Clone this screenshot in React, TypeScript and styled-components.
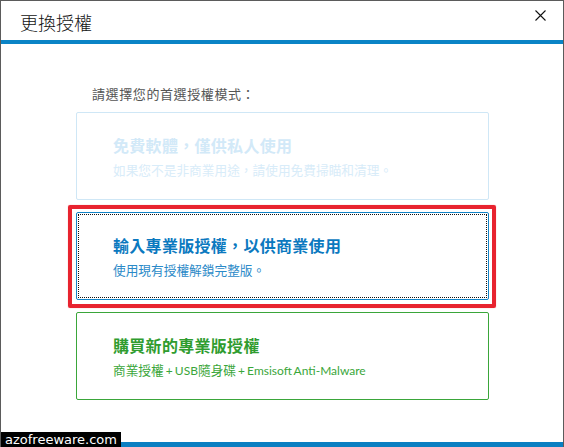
import { FC } from "react";
import styled, { createGlobalStyle } from "styled-components";

const GlobalStyle = createGlobalStyle`
  html, body {
    margin: 0;
    padding: 0;
    background: #ffffff;
  }
  body {
    font-family: "Noto Sans CJK TC", "Noto Sans", sans-serif;
  }
`;

type Tone = "faded" | "blue" | "green";

const tones: Record<Tone, { border: string; title: string; sub: string }> = {
  faded: { border: "#cfe7f6", title: "#d2e9f8", sub: "#d8ecf9" },
  blue: { border: "#1384c7", title: "#0b79bf", sub: "#2b8ac8" },
  green: { border: "#3aa63a", title: "#2f9c2f", sub: "#3aa63a" },
};

const App: FC = () => {
  return (
    <>
      <GlobalStyle />
      <Window>
        <Header>
          <Title>更換授權</Title>
          <CloseButton aria-label="close">
            <svg width="11" height="11" viewBox="0 0 11 11">
              <path d="M0.5 0.5 L10.5 10.5 M10.5 0.5 L0.5 10.5" stroke="#111" strokeWidth="1.1" fill="none" />
            </svg>
          </CloseButton>
        </Header>
        <AccentBar />
        <Body>
          <Prompt>請選擇您的首選授權模式：</Prompt>
          <Options>
            <Card tone="faded">
              <CardTitle tone="faded">免費軟體，僅供私人使用</CardTitle>
              <CardSub tone="faded">如果您不是非商業用途，請使用免費掃瞄和清理。</CardSub>
            </Card>
            <Card tone="blue" $focused>
              <CardTitle tone="blue">輸入專業版授權，以供商業使用</CardTitle>
              <CardSub tone="blue">使用現有授權解鎖完整版。</CardSub>
            </Card>
            <Card tone="green">
              <CardTitle tone="green">購買新的專業版授權</CardTitle>
              <CardSub tone="green">
                商業授權<Latin> + USB</Latin>隨身碟<Latin> + Emsisoft Anti-Malware</Latin>
              </CardSub>
            </Card>
          </Options>
        </Body>
        <Footer />
        <Watermark>azofreeware.com</Watermark>
      </Window>
    </>
  );
};

const Window = styled.div`
  position: relative;
  width: 564px;
  height: 447px;
  box-sizing: border-box;
  border: 1px solid #5b5b5b;
  border-bottom: none;
  background: #fff;
  display: flex;
  flex-direction: column;
  overflow: hidden;
`;

const Header = styled.div`
  height: 39px;
  display: flex;
  align-items: center;
  justify-content: space-between;
  padding: 0 17px 0 19px;
`;

const Title = styled.div`
  font-size: 18px;
  font-weight: 300;
  color: #111;
  line-height: 24px;
  margin-top: 2px;
`;

const CloseButton = styled.div`
  width: 11px;
  height: 11px;
  margin-top: -10px;
  display: flex;
`;

const AccentBar = styled.div`
  height: 4px;
  background: #0a84c6;
`;

const Body = styled.div`
  flex: 1;
  padding: 40px 74px 0 75px;
  display: flex;
  flex-direction: column;
`;

const Prompt = styled.div`
  font-size: 13px;
  line-height: 20px;
  color: #555;
  padding-left: 16px;
  letter-spacing: 0.6px;
`;

const Options = styled.div`
  margin-top: 8px;
  display: flex;
  flex-direction: column;
  gap: 12px;
`;

const Card = styled.div<{ tone: Tone; $focused?: boolean }>`
  position: relative;
  height: 88px;
  box-sizing: border-box;
  border: 1px solid ${(p) => tones[p.tone].border};
  border-radius: 2px;
  padding: 21px 20px 0 36px;

  ${(p) =>
    p.$focused &&
    `
    &::before {
      content: "";
      position: absolute;
      inset: 1px;
      border: 1px dotted #111;
    }
    &::after {
      content: "";
      position: absolute;
      top: -8px;
      left: -9px;
      right: -8px;
      bottom: -9px;
      border: 4px solid #e8232f;
      border-radius: 2px;
      box-shadow: 0 0 1px rgba(232, 35, 47, 0.6);
    }
  `}
`;

const CardTitle = styled.div<{ tone: Tone }>`
  font-size: 16px;
  font-weight: 700;
  line-height: 22px;
  color: ${(p) => tones[p.tone].title};
  letter-spacing: 0.3px;
`;

const CardSub = styled.div<{ tone: Tone }>`
  margin-top: 6px;
  font-family: "Lato", "Noto Sans CJK TC", sans-serif;
  font-size: 12.7px;
  line-height: 17px;
  color: ${(p) => tones[p.tone].sub};
`;

const Latin = styled.span`
  font-size: 12px;
  word-spacing: -1px;
`;

const Footer = styled.div`
  height: 5px;
  background: #0a7fc2;
`;

const Watermark = styled.div`
  position: absolute;
  left: -1px;
  bottom: 0;
  background: #000;
  color: #fff;
  font-family: "DejaVu Sans", sans-serif;
  font-size: 13px;
  line-height: 15px;
  padding: 0 4px 0 5px;
`;

export default App;
